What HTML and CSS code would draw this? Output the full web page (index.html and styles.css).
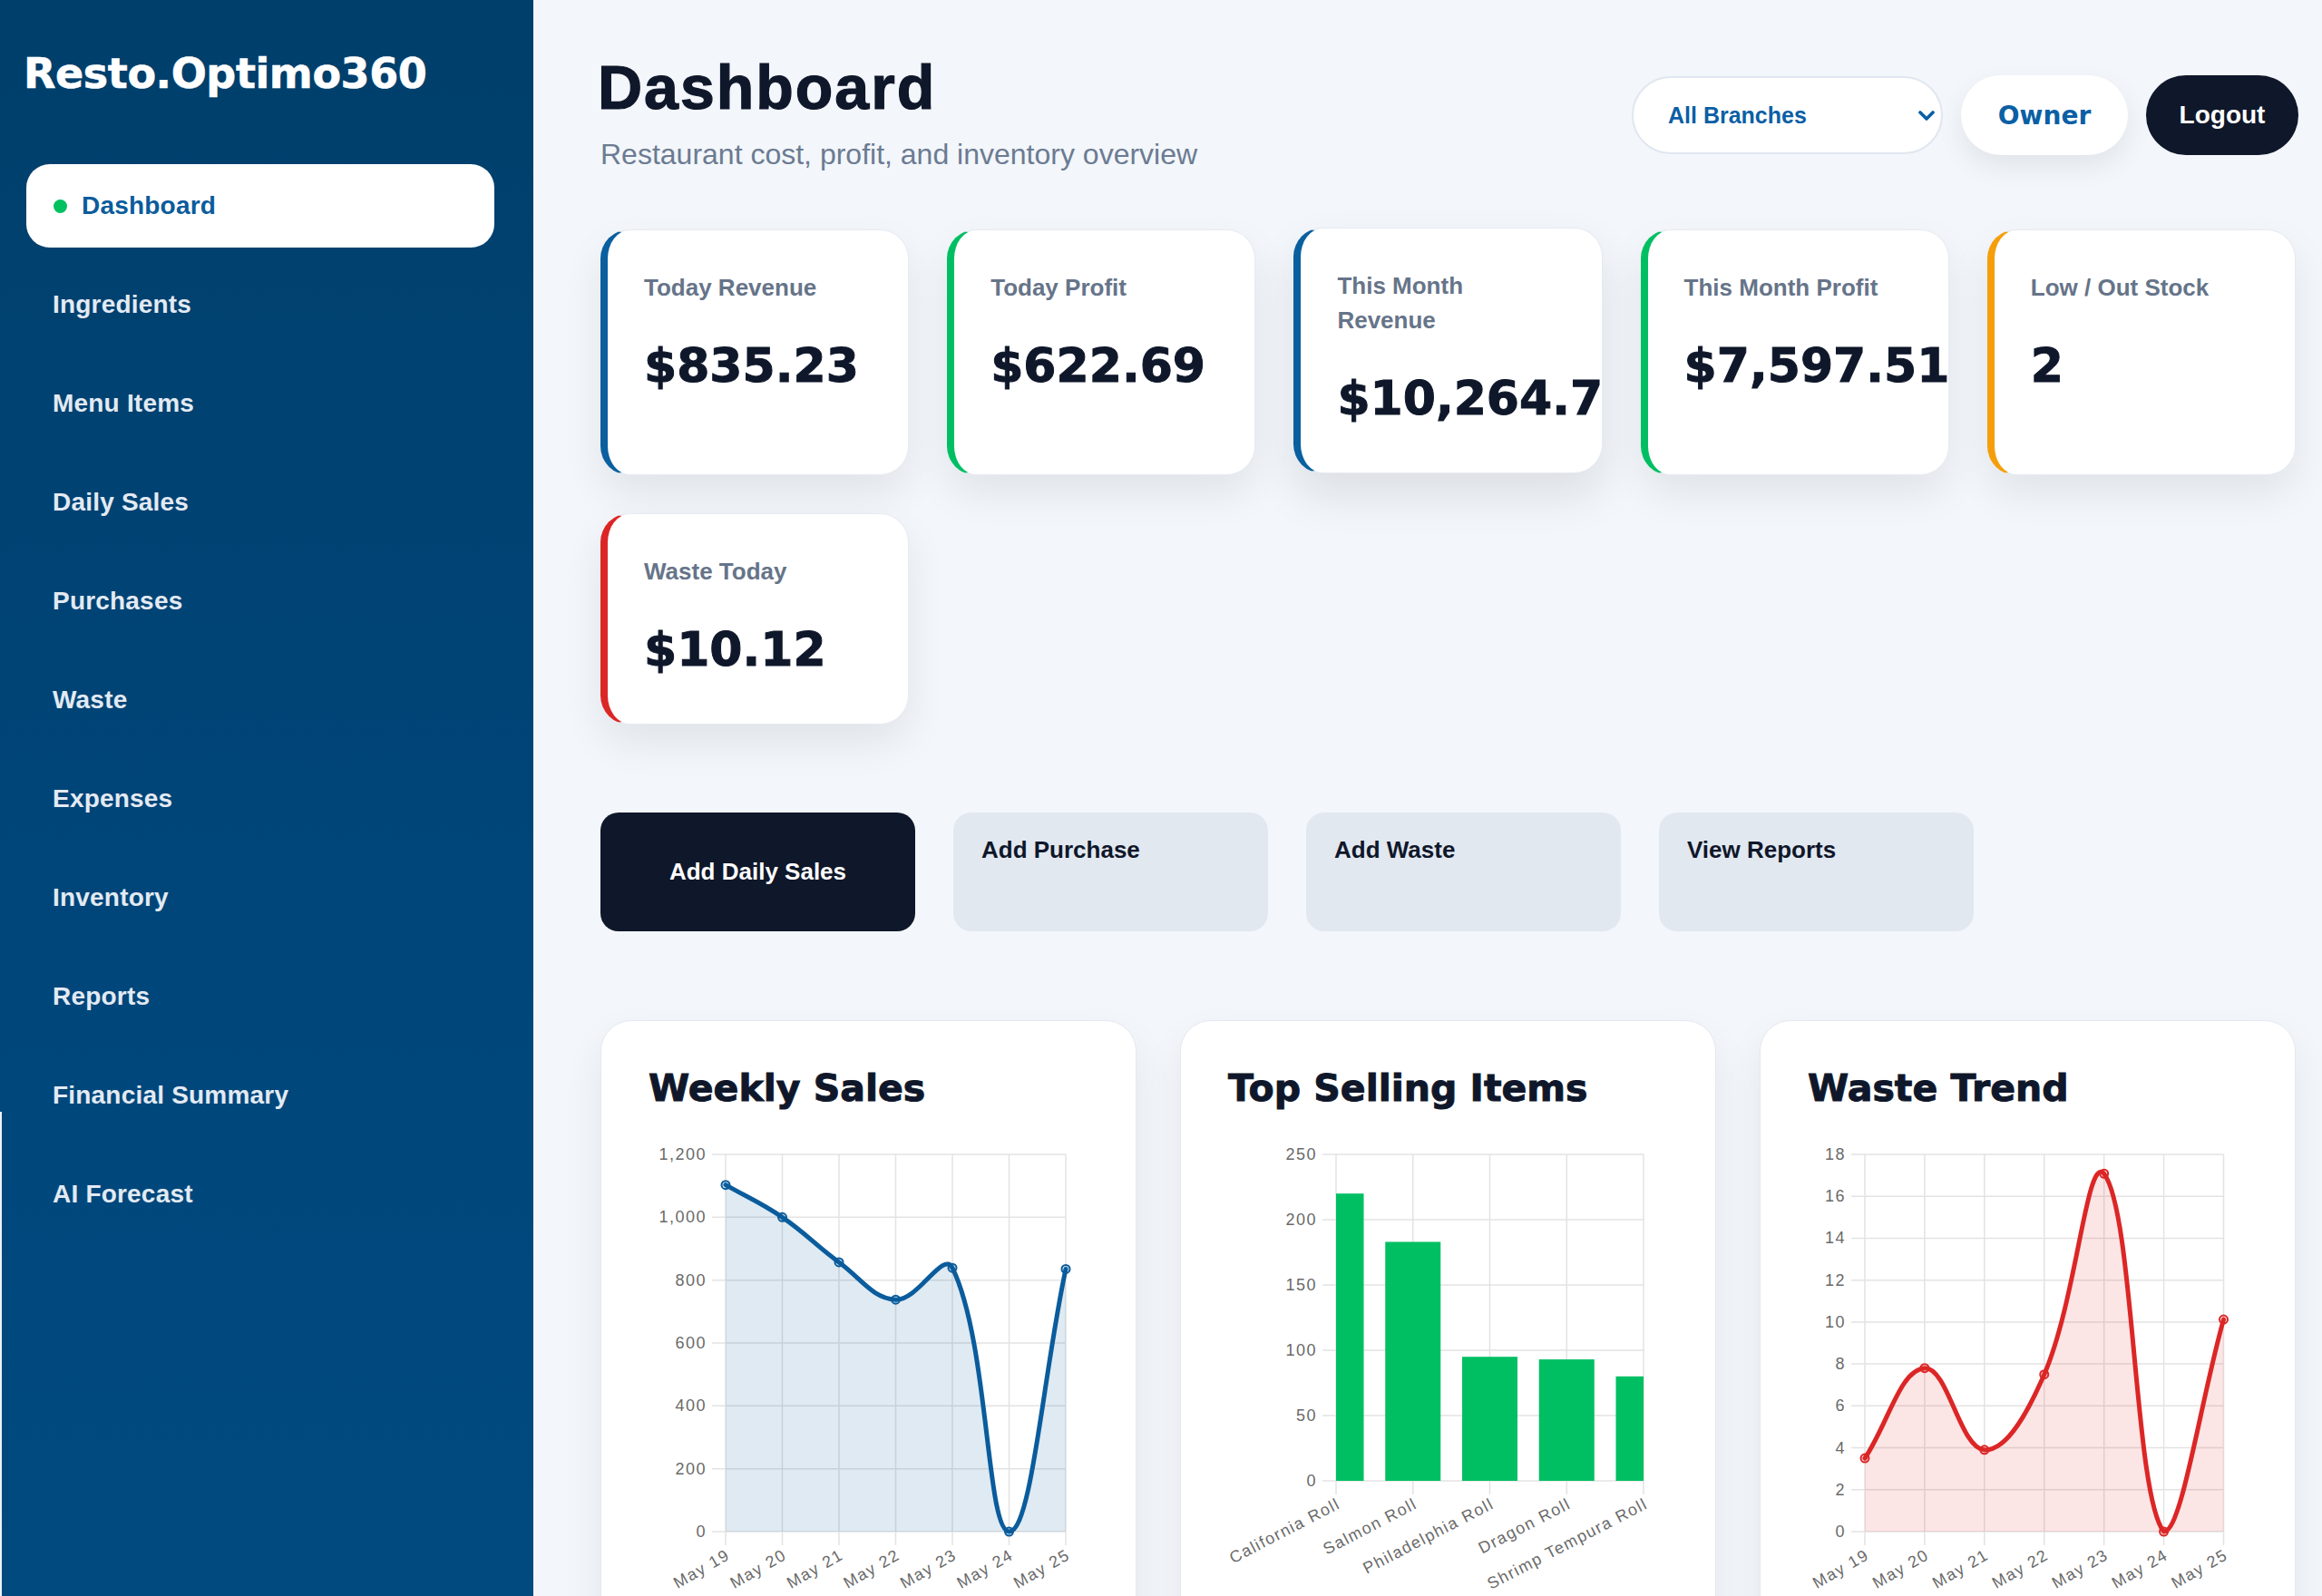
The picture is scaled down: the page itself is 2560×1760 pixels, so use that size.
FILE: index.html
```html
<!DOCTYPE html>
<html lang="en">
<head>
<meta charset="utf-8">
<title>Resto.Optimo360 — Dashboard</title>
<link rel="stylesheet" href="styles.css">
</head>
<body>
<div class="layout">
  <aside class="sidebar">
    <div class="logo">Resto.Optimo360</div>
    <nav class="nav">
      <a class="nav-item nav-item--active" href="#"><span class="nav-dot"></span>Dashboard</a>
      <a class="nav-item" href="#">Ingredients</a>
      <a class="nav-item" href="#">Menu Items</a>
      <a class="nav-item" href="#">Daily Sales</a>
      <a class="nav-item" href="#">Purchases</a>
      <a class="nav-item" href="#">Waste</a>
      <a class="nav-item" href="#">Expenses</a>
      <a class="nav-item" href="#">Inventory</a>
      <a class="nav-item" href="#">Reports</a>
      <a class="nav-item" href="#">Financial Summary</a>
      <a class="nav-item" href="#">AI Forecast</a>
    </nav>
  </aside>

  <main class="main">
    <header class="page-header">
      <div class="titles">
        <h1 class="page-title">Dashboard</h1>
        <p class="page-subtitle">Restaurant cost, profit, and inventory overview</p>
      </div>
      <div class="header-controls">
        <div class="branch-select">
          <span>All Branches</span>
          <svg class="chev" width="18" height="11" viewBox="0 0 18 11"><path d="M2 2 L9 9 L16 2" fill="none" stroke="#0b5fa5" stroke-width="3.6" stroke-linecap="round" stroke-linejoin="round"/></svg>
        </div>
        <button class="btn-owner">Owner</button>
        <button class="btn-logout">Logout</button>
      </div>
    </header>

    <section class="stats">
      <article class="stat stat--blue"><p class="stat-label">Today Revenue</p><p class="stat-value">$835.23</p></article>
      <article class="stat stat--green"><p class="stat-label">Today Profit</p><p class="stat-value">$622.69</p></article>
      <article class="stat stat--blue stat--raised"><p class="stat-label">This Month Revenue</p><p class="stat-value">$10,264.75</p></article>
      <article class="stat stat--green"><p class="stat-label">This Month Profit</p><p class="stat-value">$7,597.51</p></article>
      <article class="stat stat--amber"><p class="stat-label">Low / Out Stock</p><p class="stat-value">2</p></article>
      <article class="stat stat--red"><p class="stat-label">Waste Today</p><p class="stat-value">$10.12</p></article>
    </section>

    <section class="actions">
      <a class="action action--primary" href="#">Add Daily Sales</a>
      <a class="action" href="#">Add Purchase</a>
      <a class="action" href="#">Add Waste</a>
      <a class="action" href="#">View Reports</a>
    </section>

    <section class="charts">
      <div class="chart-card">
        <h2 class="chart-title">Weekly Sales</h2>
        <svg id="chart-sales" class="chart" width="485" height="520"></svg>
      </div>
      <div class="chart-card">
        <h2 class="chart-title">Top Selling Items</h2>
        <svg id="chart-items" class="chart" width="485" height="520"></svg>
      </div>
      <div class="chart-card">
        <h2 class="chart-title">Waste Trend</h2>
        <svg id="chart-waste" class="chart" width="485" height="520"></svg>
      </div>
    </section>
  </main>
</div>
<script src="app.js"></script>
</body>
</html>
```

FILE: styles.css
```css
* { box-sizing: border-box; }
html, body { margin: 0; padding: 0; }
body {
  font-family: "Liberation Sans", Arial, Helvetica, sans-serif;
  background: #f3f6fa;
  color: #0f172a;
}
.layout { display: flex; min-height: 100vh; }

/* Sidebar */
.sidebar {
  position: relative;
  flex: 0 0 588px;
  width: 588px;
  padding: 54px 43px 60px 29px;
  background: linear-gradient(180deg, #003f6b 0%, #00467a 55%, #004b81 100%);
}
.sidebar::after {
  content: "";
  position: absolute;
  left: 0;
  top: 1226px;
  bottom: 0;
  width: 2px;
  background: #eef2f7;
}
.logo {
  margin-left: -3px;
  font-family: "DejaVu Sans", sans-serif;
  font-weight: 700;
  font-size: 46px;
  line-height: 54px;
  letter-spacing: -0.4px;
  color: #ffffff;
  -webkit-text-stroke: 0.6px #ffffff;
}
.nav {
  margin-top: 73px;
  display: flex;
  flex-direction: column;
  gap: 17px;
}
.nav-item {
  display: flex;
  align-items: center;
  height: 92px;
  padding-left: 29px;
  border-radius: 26px;
  font-size: 28px;
  font-weight: 700;
  letter-spacing: 0.2px;
  color: #e3eaf3;
  text-decoration: none;
}
.nav-item--active {
  background: #ffffff;
  color: #0b5c9c;
  padding-left: 30px;
}
.nav-dot {
  flex: none;
  width: 15px;
  height: 15px;
  border-radius: 50%;
  background: #00c060;
  margin-right: 16px;
}

/* Main */
.main {
  flex: 1 1 auto;
  min-width: 0;
  padding: 59px 29px 80px 74px;
}
.page-header {
  display: flex;
  justify-content: space-between;
  align-items: center;
}
.page-title {
  margin: 0 0 0 -3px;
  font-size: 68px;
  line-height: 75px;
  font-weight: 700;
  letter-spacing: 2px;
  color: #0f172a;
  -webkit-text-stroke: 1.2px #0f172a;
}
.page-subtitle {
  margin: 17px 0 0;
  font-size: 32px;
  line-height: 38px;
  color: #6b7b92;
}
.header-controls {
  display: flex;
  align-items: center;
  gap: 20px;
  margin: 6px -3px 0 0;
}
.branch-select {
  display: flex;
  align-items: center;
  justify-content: space-between;
  width: 343px;
  height: 86px;
  padding: 0 7px 0 38px;
  border: 2px solid #e0e7f0;
  border-radius: 43px;
  background: #ffffff;
  font-size: 25px;
  font-weight: 700;
  color: #0b5fa5;
}
.btn-owner,
.btn-logout {
  display: flex;
  align-items: center;
  justify-content: center;
  height: 88px;
  border: none;
  border-radius: 44px;
  cursor: pointer;
}
.btn-owner {
  width: 184px;
  background: #ffffff;
  color: #0b5fa5;
  font-family: "DejaVu Sans", sans-serif;
  font-weight: 700;
  font-size: 28px;
  box-shadow: 0 12px 30px rgba(15, 23, 42, 0.08);
}
.btn-logout {
  width: 168px;
  background: #0f172a;
  color: #ffffff;
  font-family: "Liberation Sans", Arial, sans-serif;
  font-weight: 700;
  font-size: 28px;
}

/* Stat cards */
.stats {
  margin-top: 64px;
  display: grid;
  grid-template-columns: repeat(5, 1fr);
  gap: 42px;
}
.stat {
  background: #ffffff;
  border: 1px solid #e6ebf2;
  border-left: 8px solid #0a5f9f;
  border-radius: 32px;
  padding: 44px 48px 52px 40px;
  overflow: hidden;
  box-shadow: 0 20px 45px rgba(15, 23, 42, 0.08);
}
.stat--blue { border-left-color: #0a5f9f; }
.stat--green { border-left-color: #00bf63; }
.stat--amber { border-left-color: #f59e0b; }
.stat--red { border-left-color: #dc2626; }
.stat--raised { transform: translateY(-2px); box-shadow: 0 24px 50px rgba(15, 23, 42, 0.1); }
.stat-label {
  margin: 0 0 37px;
  font-size: 26px;
  line-height: 38px;
  font-weight: 700;
  color: #667489;
}
.stat-value {
  margin: 0;
  font-family: "DejaVu Sans", sans-serif;
  font-weight: 700;
  font-size: 52px;
  line-height: 60px;
  white-space: nowrap;
  color: #0f172a;
  -webkit-text-stroke: 1px #0f172a;
}

/* Quick actions */
.actions {
  margin-top: 97px;
  display: flex;
  gap: 42px;
}
.action {
  display: block;
  width: 347px;
  height: 131px;
  padding: 26px 31px;
  border-radius: 20px;
  background: #e2e8f0;
  color: #0f172a;
  font-size: 26px;
  line-height: 31px;
  font-weight: 700;
  text-decoration: none;
}
.action--primary {
  display: flex;
  align-items: center;
  justify-content: center;
  padding: 0;
  background: #0f172a;
  color: #ffffff;
}

/* Charts */
.charts {
  margin-top: 98px;
  display: grid;
  grid-template-columns: repeat(3, 1fr);
  gap: 48px;
}
.chart-card {
  background: #ffffff;
  border: 1px solid #e4e9f1;
  border-radius: 34px;
  padding: 50px 52px 40px;
  box-shadow: 0 20px 45px rgba(15, 23, 42, 0.07);
}
.chart-title {
  margin: 0;
  font-family: "DejaVu Sans", sans-serif;
  font-weight: 700;
  font-size: 41px;
  line-height: 48px;
  color: #0f172a;
  -webkit-text-stroke: 1px #0f172a;
}
.chart {
  display: block;
  margin-top: 30px;
  overflow: visible;
}
.chart .grid line {
  stroke: #e3e3e3;
  stroke-width: 1.5;
}
.chart .ticks text {
  font-family: "Liberation Sans", Arial, sans-serif;
  font-size: 18px;
  letter-spacing: 1.5px;
  fill: #6a6a6a;
}
.chart .bar { fill: #00bf63; }
```

FILE: app.js
```js
(function () {
  var NS = 'http://www.w3.org/2000/svg';

  function make(name, attrs, parent) {
    var node = document.createElementNS(NS, name);
    Object.keys(attrs || {}).forEach(function (k) { node.setAttribute(k, attrs[k]); });
    if (parent) parent.appendChild(node);
    return node;
  }

  function label(parent, text, attrs) {
    var t = make('text', attrs, parent);
    t.textContent = text;
    return t;
  }

  function fmt(v) {
    var s = String(Math.round(v * 100) / 100);
    return s.replace(/\B(?=(\d{3})+(?!\d))/g, ',');
  }

  function scaleY(area, max) {
    return function (v) { return area.bottom - (v / max) * (area.bottom - area.top); };
  }

  function xPositions(area, n) {
    var out = [];
    for (var i = 0; i < n; i++) out.push(area.left + (area.right - area.left) * i / (n - 1));
    return out;
  }

  function grid(svg, area, max, step, xs, labels, angle) {
    var y = scaleY(area, max);
    var g = make('g', { 'class': 'grid' }, svg);
    var tl = make('g', { 'class': 'ticks' }, svg);
    var count = Math.round(max / step);
    for (var i = 0; i <= count; i++) {
      var v = i * step;
      var yy = y(v);
      make('line', { x1: area.left - 15, x2: area.right, y1: yy, y2: yy }, g);
      label(tl, fmt(v), { x: area.left - 21, y: yy, 'text-anchor': 'end', 'dominant-baseline': 'central' });
    }
    xs.forEach(function (x, idx) {
      make('line', { x1: x, x2: x, y1: area.top, y2: area.bottom + 15 }, g);
      label(tl, labels[idx], {
        x: 0, y: 0, 'text-anchor': 'end', 'dominant-baseline': 'central',
        transform: 'translate(' + (x + 3) + ' ' + (area.bottom + 24) + ') rotate(' + (-angle) + ')'
      });
    });
  }

  function curvePath(pts, tension, area) {
    function cx(v) { return Math.min(Math.max(v, area.left), area.right); }
    function cy(v) { return Math.min(Math.max(v, area.top), area.bottom); }
    var cps = pts.map(function (cur, i) {
      var prev = pts[i - 1] || cur;
      var next = pts[i + 1] || cur;
      var d01 = Math.hypot(cur.x - prev.x, cur.y - prev.y);
      var d12 = Math.hypot(next.x - cur.x, next.y - cur.y);
      var s01 = d01 / (d01 + d12) || 0;
      var s12 = d12 / (d01 + d12) || 0;
      var fa = tension * s01, fb = tension * s12;
      return {
        px: cx(cur.x - fa * (next.x - prev.x)), py: cy(cur.y - fa * (next.y - prev.y)),
        nx: cx(cur.x + fb * (next.x - prev.x)), ny: cy(cur.y + fb * (next.y - prev.y))
      };
    });
    var d = 'M' + pts[0].x.toFixed(2) + ' ' + pts[0].y.toFixed(2);
    for (var i = 1; i < pts.length; i++) {
      d += ' C' + [cps[i - 1].nx, cps[i - 1].ny, cps[i].px, cps[i].py, pts[i].x, pts[i].y]
        .map(function (n) { return n.toFixed(2); }).join(' ');
    }
    return d;
  }

  function lineChart(svg, cfg) {
    var area = cfg.area;
    var y = scaleY(area, cfg.max);
    var xs = xPositions(area, cfg.data.length);
    grid(svg, area, cfg.max, cfg.step, xs, cfg.labels, cfg.angle);
    var pts = cfg.data.map(function (v, i) { return { x: xs[i], y: y(v) }; });
    var d = curvePath(pts, 0.4, area);
    var last = pts[pts.length - 1], first = pts[0];
    make('path', {
      d: d + ' L' + last.x + ' ' + area.bottom + ' L' + first.x + ' ' + area.bottom + ' Z',
      fill: cfg.fill, stroke: 'none'
    }, svg);
    make('path', {
      d: d, fill: 'none', stroke: cfg.color, 'stroke-width': 5,
      'stroke-linejoin': 'round', 'stroke-linecap': 'round'
    }, svg);
    pts.forEach(function (p) {
      make('circle', { cx: p.x, cy: p.y, r: 4.5, fill: cfg.pointFill, stroke: cfg.color, 'stroke-width': 2 }, svg);
    });
  }

  function barChart(svg, cfg) {
    var area = cfg.area;
    var y = scaleY(area, cfg.max);
    var xs = xPositions(area, cfg.data.length);
    grid(svg, area, cfg.max, cfg.step, xs, cfg.labels, cfg.angle);
    var defs = make('defs', {}, svg);
    var clip = make('clipPath', { id: 'clip-' + svg.id }, defs);
    make('rect', { x: area.left, y: area.top - 2, width: area.right - area.left, height: area.bottom - area.top + 2 }, clip);
    var g = make('g', { 'clip-path': 'url(#clip-' + svg.id + ')' }, svg);
    var w = (area.right - area.left) / (cfg.data.length - 1) * 0.72;
    cfg.data.forEach(function (v, i) {
      make('rect', { 'class': 'bar', x: xs[i] - w / 2, y: y(v), width: w, height: area.bottom - y(v) }, g);
    });
  }

  var days = ['May 19', 'May 20', 'May 21', 'May 22', 'May 23', 'May 24', 'May 25'];

  lineChart(document.getElementById('chart-sales'), {
    area: { left: 85, right: 460, top: 19, bottom: 435 },
    max: 1200, step: 200,
    data: [1103, 1000, 857, 738, 839, 0, 835.23],
    labels: days, angle: 30,
    color: '#0a5c9c', fill: 'rgba(10, 92, 156, 0.13)', pointFill: 'rgba(10, 92, 156, 0.15)'
  });

  barChart(document.getElementById('chart-items'), {
    area: { left: 119, right: 458, top: 19, bottom: 379 },
    max: 250, step: 50,
    data: [220, 183, 95, 93, 80],
    labels: ['California Roll', 'Salmon Roll', 'Philadelphia Roll', 'Dragon Roll', 'Shrimp Tempura Roll'],
    angle: 27.5
  });

  lineChart(document.getElementById('chart-waste'), {
    area: { left: 63, right: 458.5, top: 19, bottom: 435 },
    max: 18, step: 2,
    data: [3.5, 7.8, 3.9, 7.5, 17.08, 0, 10.12],
    labels: days, angle: 30,
    color: '#dc2626', fill: 'rgba(220, 38, 38, 0.12)', pointFill: 'rgba(220, 38, 38, 0.15)'
  });
})();
```
